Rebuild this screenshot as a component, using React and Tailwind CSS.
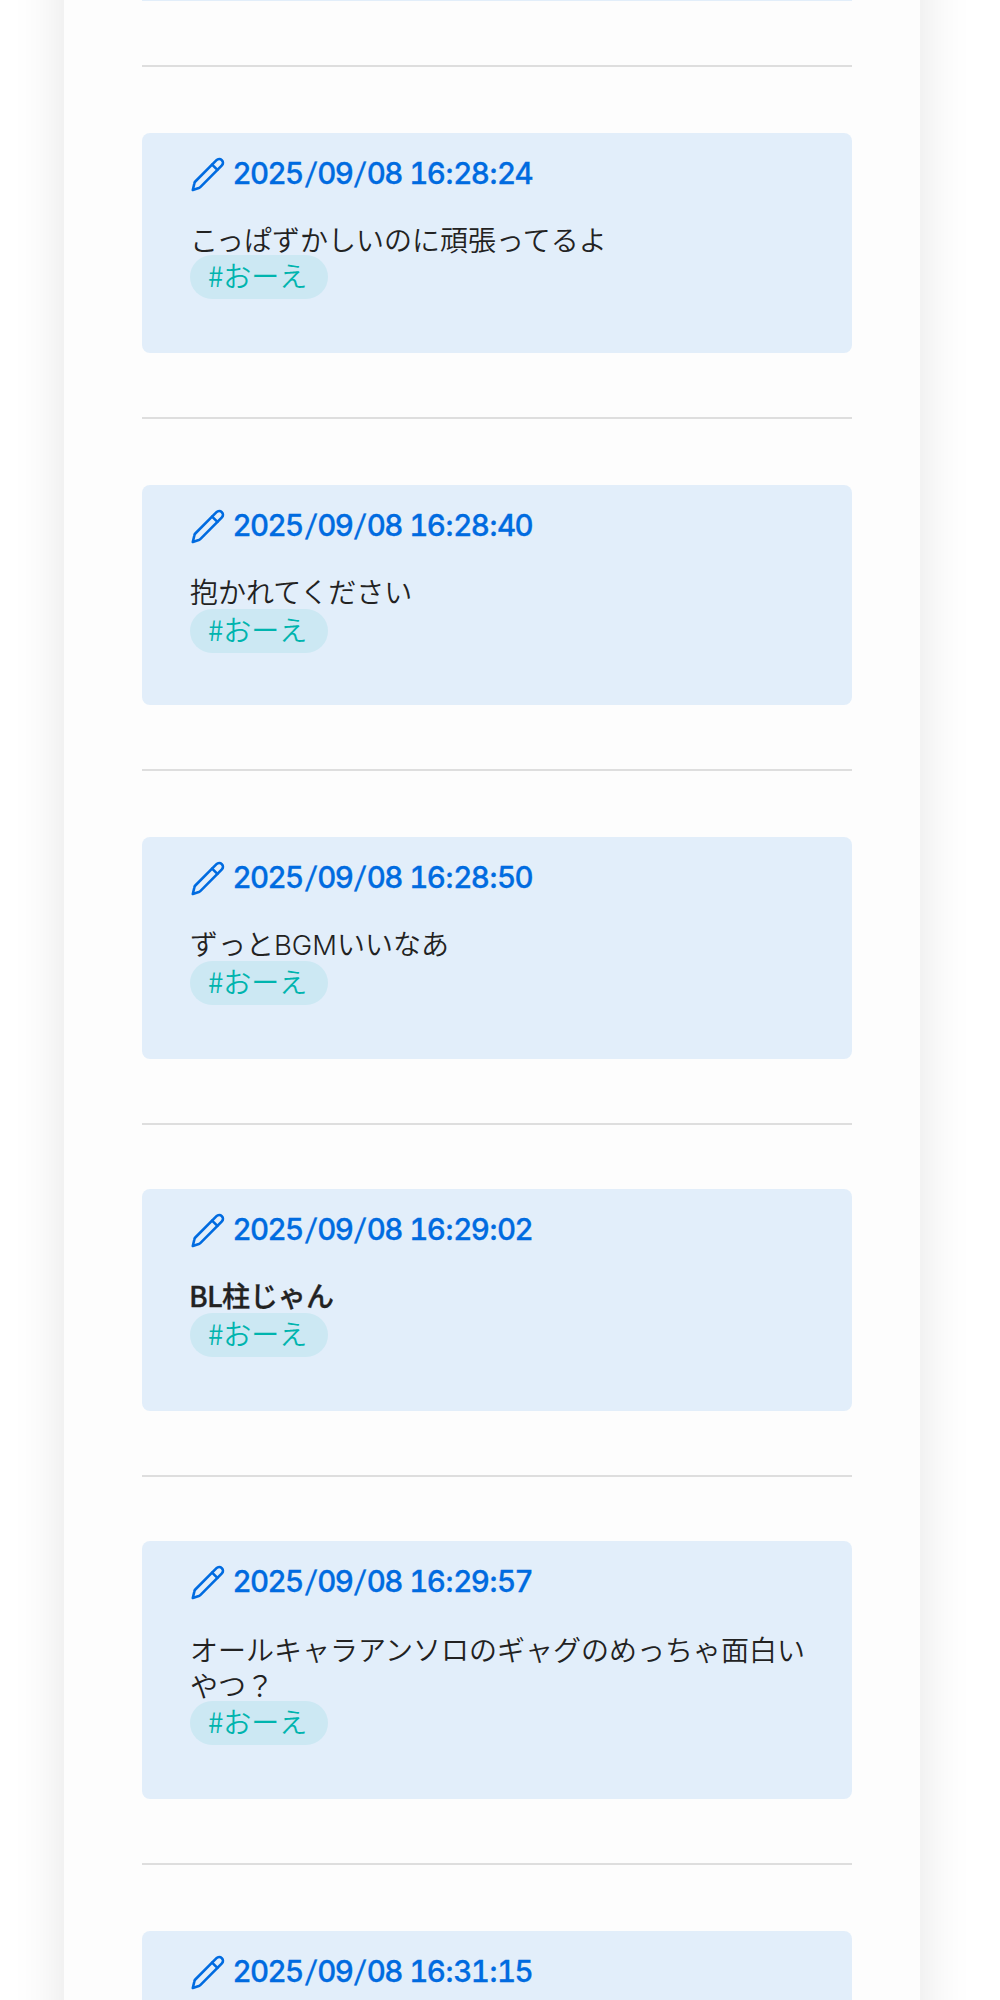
import React from 'react';

const posts = [
  { time: '2025/09/08 16:28:24', text: 'こっぱずかしいのに頑張ってるよ', box: 'h-[220px]', body: 'h-[34px] mt-[26px]' },
  { time: '2025/09/08 16:28:40', text: '抱かれてください', box: 'h-[220px]', body: 'h-[36px] mt-[26px]' },
  { time: '2025/09/08 16:28:50', text: 'ずっとBGMいいなあ', box: 'h-[222px]', body: 'h-[36px] mt-[26px]' },
  { time: '2025/09/08 16:29:02', text: 'BL柱じゃん', bold: true, box: 'h-[222px]', body: 'h-[36px] mt-[26px]' },
  { time: '2025/09/08 16:29:57', text: 'オールキャラアンソロのギャグのめっちゃ面白いやつ？', box: 'h-[258px]', body: 'h-[70px] mt-[28px]' },
  { time: '2025/09/08 16:31:15', text: '', box: 'h-[220px]', body: 'h-[34px] mt-[26px]' },
];

// space between a divider and the card under it
const gaps = ['mb-[66px]', 'mb-[66px]', 'mb-[66px]', 'mb-[64px]', 'mb-[64px]', 'mb-[66px]'];

const Pencil = () => (
  <svg className="mt-[1px] h-9 w-9 shrink-0" viewBox="0 0 36 36" fill="none" stroke="currentColor" strokeWidth="2.6" strokeLinecap="round" strokeLinejoin="round">
    <path d="M2.8 34 4.4 27.2Q4.6 26.2 5.3 25.5L26.5 4.2A3.7 3.7 0 0 1 31.9 9.4L10.8 30.6Q9.8 31.6 8.8 32Z" />
    <path d="m22.1 8.6 5.3 5.3" />
  </svg>
);

const Stamp = ({ value }) => (
  <time className="ml-[6.5px] font-['Inter',sans-serif] text-[29.5px] leading-[36px] font-medium tracking-[-1.6px] whitespace-pre tabular-nums [-webkit-text-stroke:0.3px_#006be0]">
    {value.split(/([/: ])/).map((part, i) => {
      if (part === '/') return <span key={i} className="mr-[2.4px] ml-[3.2px] inline-block -skew-x-6 font-normal">/</span>;
      if (part === ':') return <span key={i} className="mr-[1.3px] ml-[1.2px]">:</span>;
      if (part === ' ') return <span key={i} className="mr-[1.2px]"> </span>;
      return part;
    })}
  </time>
);

const Body = ({ text, bold }) => text.split(/([A-Z]+)/).map((part, i) => (
  /[A-Z]/.test(part) ? <span key={i} className={bold ? 'ml-[-1px] tracking-[-0.6px]' : "font-['Inter',sans-serif] text-[27.5px] leading-none font-light"}>{part}</span> : part
));

const Post = ({ post }) => (
  <article className={`mb-16 rounded-lg bg-[#e2eefa] pt-[22px] pr-[46px] pl-12 ${post.box}`}>
    <h2 className="flex h-[40px] items-start text-[#006be0]">
      <Pencil />
      <Stamp value={post.time} />
    </h2>
    <p className={`text-[28px] leading-[36px] text-[#222] ${post.body} ${post.bold ? 'font-medium [-webkit-text-stroke:0.3px_#222]' : 'font-[350]'}`}>
      <Body text={post.text} bold={post.bold} />
    </p>
    {post.text && (
      <a className="block h-[44px] w-[138px] rounded-full bg-[#cce8f3] pl-[18px] text-[28px] leading-[41px] font-[350] text-[#00b4ae]">
        #おーえ
      </a>
    )}
  </article>
);

const App = () => (
  <div className="h-[2000px] overflow-hidden bg-white font-['Noto_Sans_CJK_JP',sans-serif]">
    <main className="-mt-[100px] ml-16 h-[2200px] w-[856px] bg-[#fdfdfd] pt-[100px] pr-[68px] pl-[78px] shadow-[0_0_50px_rgba(0,0,0,0.11)]">
      <div className="mb-16 h-px bg-[#e2eefa]" />
      {posts.map((post, i) => (
        <React.Fragment key={post.time}>
          <hr className={`h-0.5 border-0 bg-[#dedede] ${gaps[i]}`} />
          <Post post={post} />
        </React.Fragment>
      ))}
    </main>
  </div>
);

export default App;
